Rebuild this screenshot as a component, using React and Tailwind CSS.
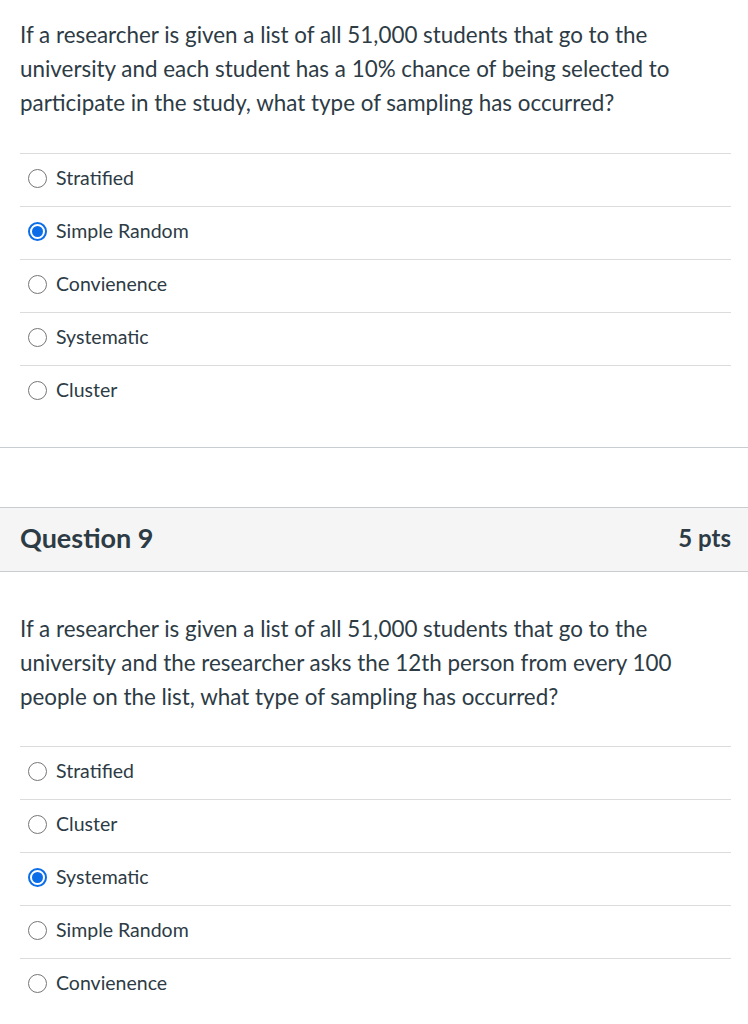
import React from "react";

const Radio = ({ checked }) =>
  checked ? (
    <span className="flex h-[19px] w-[19px] shrink-0 items-center justify-center rounded-full border-2 border-[#0b6ee8] bg-white">
      <span className="h-[11px] w-[11px] rounded-full bg-[#0b6ee8]" />
    </span>
  ) : (
    <span className="h-[19px] w-[19px] shrink-0 rounded-full border-[1.5px] border-[#767676] bg-white" />
  );

const Answers = ({ options, selected }) => (
  <div className="ml-[20px] mr-[17px]">
    {options.map((opt) => (
      <div key={opt} className="flex h-[53px] items-center gap-[9px] border-t border-[#dcdcdc] pl-[8px] pb-[4px]">
        <Radio checked={opt === selected} />
        <span className="text-[19.5px] text-[#2d3b45]">{opt}</span>
      </div>
    ))}
  </div>
);

export default function App() {
  return (
    <div className="min-h-screen bg-white font-['Lato','Open_Sans',sans-serif] text-[#2d3b45]">
      {/* Question 8 (tail) */}
      <p className="pl-[20px] pr-[17px] pt-[18px] text-[22.4px] leading-[34px]">
        If a researcher is given a list of all 51,000 students that go to the university and each student has a 10% chance of being selected to participate in the study, what type of sampling has occurred?
      </p>
      <div className="mt-[33px]">
        <Answers
          options={["Stratified", "Simple Random", "Convienence", "Systematic", "Cluster"]}
          selected="Simple Random"
        />
      </div>
      <div className="mt-[29px] border-t border-[#c7cdd1]" />

      {/* Question 9 */}
      <div className="mt-[59px] flex h-[65px] items-center justify-between border-y border-[#c7cdd1] bg-[#f5f5f5] pl-[20px] pr-[17px] pb-[3px]">
        <h2 className="text-[27px] font-bold">Question 9</h2>
        <span className="text-[24px] font-bold">5 pts</span>
      </div>
      <p className="pl-[20px] pr-[17px] pt-[40px] text-[22.4px] leading-[34px]">
        If a researcher is given a list of all 51,000 students that go to the university and the researcher asks the 12th person from every 100 people on the list, what type of sampling has occurred?
      </p>
      <div className="mt-[32px]">
        <Answers
          options={["Stratified", "Cluster", "Systematic", "Simple Random", "Convienence"]}
          selected="Systematic"
        />
      </div>
    </div>
  );
}
